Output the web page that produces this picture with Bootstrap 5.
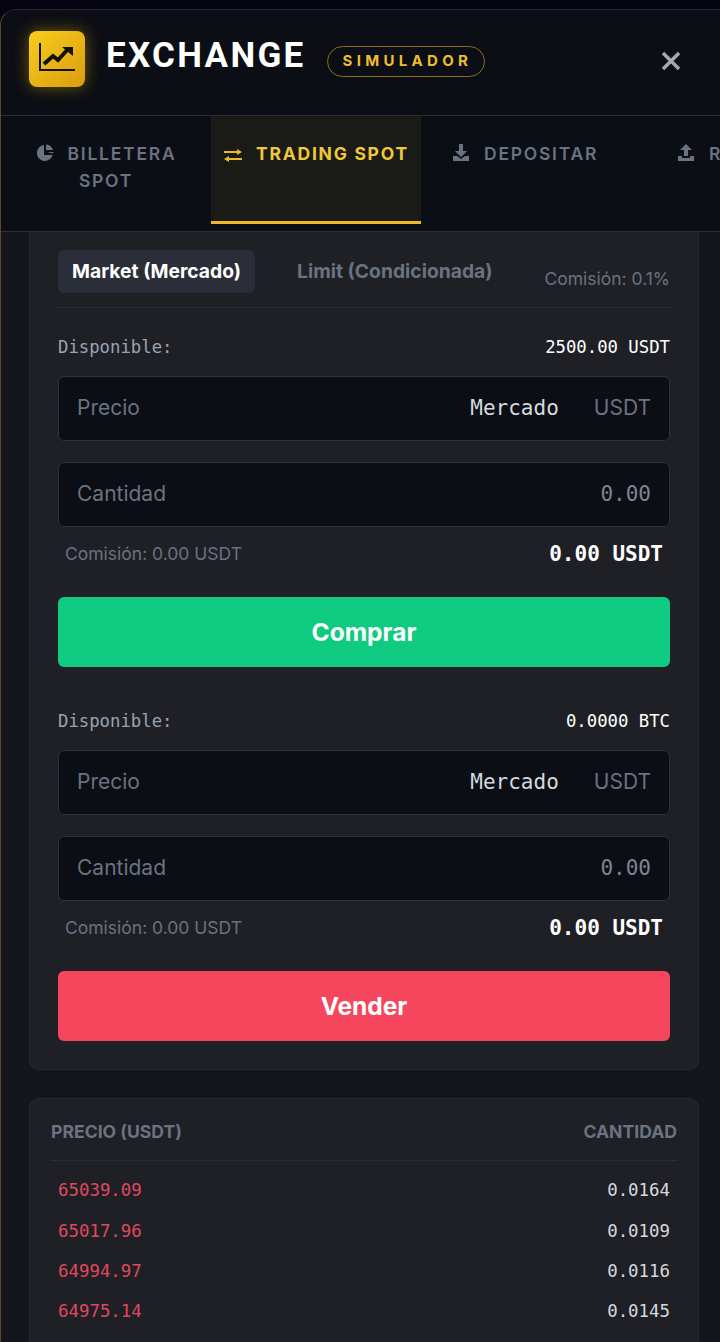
<!DOCTYPE html>
<html lang="es">
<head>
  <meta charset="UTF-8" />
  <meta name="viewport" content="width=device-width, initial-scale=1.0"/>
  <title>Exchange Simulador</title>
  <link href="https://cdn.jsdelivr.net/npm/bootstrap@5.3.2/dist/css/bootstrap.min.css" rel="stylesheet" />
  <style>
    html, body { height: 100%; overflow: hidden; }
    body {
      background-color: #05030f;
      font-family: Inter, sans-serif;
      padding-top: 9px;
    }
    .mono { font-family: "DejaVu Sans Mono", monospace; }
    .shell {
      height: 1333px;
      overflow: hidden;
      background-color: #14161b;
      border-top: 1px solid #262a33;
      border-left: 1px solid #5a4a1c;
      border-top-left-radius: 16px;
    }
    .top-bar {
      height: 106px;
      padding: 0 28px 8px;
      background-color: #0b0e14;
      border-bottom: 1px solid #2a2e37;
    }
    .logo-box {
      width: 56px;
      height: 56px;
      flex: none;
      border-radius: 8px;
      background: linear-gradient(135deg, #f9cd1c, #d99d0f);
      box-shadow: 0 0 16px rgba(240, 185, 11, .45);
    }
    .brand {
      font-family: Roboto, sans-serif;
      font-size: 35px;
      font-weight: 700;
      letter-spacing: 2.3px;
      color: #fff;
      line-height: 1;
      margin-left: 21px;
      margin-top: -6px;
    }
    .sim-tag {
      height: 31px;
      margin-left: 21px;
      margin-top: 5px;
      padding: 0 12px 0 15px;
      border: 1px solid #8a6f22;
      border-radius: 16px;
      color: #eebd2c;
      font-size: 15px;
      font-weight: 700;
      letter-spacing: 4.3px;
    }
    .close-x { margin-left: auto; margin-right: 10px; margin-top: 4px; }
    .tab-row {
      height: 116px;
      background-color: #0b0e14;
      border-bottom: 1px solid #2a2e37;
      white-space: nowrap;
    }
    .tab-item {
      padding: 24px 0 0 32px;
      color: #6b7280;
      font-size: 17.5px;
      font-weight: 600;
      letter-spacing: 1.75px;
      line-height: 27px;
      flex: none;
    }
    .tab-item svg { margin-right: 14px; vertical-align: -2px; }
    .tab-wallet { width: 210px; padding: 24px 0 0; text-align: center; }
    .tab-active {
      width: 210px;
      height: 108px;
      padding-left: 13px;
      background-color: #1a1a17;
      color: #f0c93a;
      border-bottom: 3px solid #ecb92c;
      font-weight: 700;
    }
    .tab-deposit { width: 224px; padding-left: 31px; }
    .scroll-area { padding: 0 21px 0 28px; }
    .panel {
      background-color: #1e2026;
      border: 1px solid #272a31;
      border-radius: 10px;
      padding: 0 28px 28px;
    }
    .panel-first { border-top: 0; border-top-left-radius: 0; border-top-right-radius: 0; padding-top: 18px; }
    .order-tabs { border-bottom: 1px solid #2a2d34; padding-bottom: 14px; margin-bottom: 27px; }
    .order-tab {
      padding: 0 14px;
      height: 43px;
      border-radius: 6px;
      font-size: 19.3px;
      font-weight: 700;
      color: #6b7280;
      line-height: 43px;
    }
    .order-tab.on { background-color: #2b2d38; color: #fff; margin-right: 28px; }
    .fee-note { margin-left: auto; margin-bottom: 1px; color: #6b7280; font-size: 17.5px; align-self: flex-end; }
    .avail { font-size: 17.3px; color: #fff; line-height: 24px; margin-bottom: 17px; }
    .avail span:first-child { color: #9ca3af; }
    .field {
      height: 65px;
      background-color: #0b0e14;
      border: 1px solid #2e323b;
      border-radius: 6px;
      padding: 0 18px 2px;
      font-size: 21px;
      margin-bottom: 21px;
      color: #6b7280;
    }
    .field .mono { color: #d6d9de; margin-left: auto; margin-right: 35px; padding-top: 2px; }
    .field .qty { color: #7f848e; margin-right: 0; }
    .sum-row { height: 31px; padding: 2px 7px 0; margin-top: -10px; margin-bottom: 28px; }
    .sum-row .fee { color: #6b7280; font-size: 17.5px; }
    .sum-row .total { color: #fff; font-size: 21px; font-weight: 700; }
    .act-btn {
      display: block;
      width: 100%;
      height: 70px;
      font-size: 24.5px;
      font-weight: 700;
      color: #fff;
      border: 0;
      border-radius: 6px;
    }
    .act-buy { background-color: #0ecb81; margin-bottom: 42px; }
    .act-buy:hover { background-color: #0ecb81; color: #fff; }
    .act-sell { background-color: #f6465d; }
    .act-sell:hover { background-color: #f6465d; color: #fff; }
    .book { margin-top: 28px; padding: 20px 21px 0; height: 300px; }
    .book-head {
      color: #6b7280;
      font-size: 17.6px;
      font-weight: 700;
      padding-bottom: 15px;
      border-bottom: 1px solid #2a2d34;
      margin-bottom: 9px;
    }
    .book-row { padding: 0 7px; height: 40.2px; font-size: 17.4px; color: #d6d9de; }
    .book-row span:first-child { color: #e0485c; }
  </style>
</head>
<body>
  <div class="shell">
    <div class="top-bar d-flex align-items-center">
      <div class="logo-box d-flex align-items-center justify-content-center">
        <svg width="38" height="38" viewBox="0 0 38 38" fill="none">
          <path d="M2 3V30H37" stroke="#14110a" stroke-width="2"/>
          <path d="M6 24L15 16L20 20L31 8" stroke="#14110a" stroke-width="4"/>
          <path d="M24 7H35V16Z" fill="#14110a"/>
        </svg>
      </div>
      <div class="brand">EXCHANGE</div>
      <div class="sim-tag d-flex align-items-center">SIMULADOR</div>
      <svg class="close-x" width="22" height="22" viewBox="0 0 22 22">
        <path d="M3 3L19 19M19 3L3 19" stroke="#a4a9b3" stroke-width="3.4"/>
      </svg>
    </div>

    <div class="tab-row d-flex align-items-start">
      <div class="tab-item tab-wallet">
        <svg width="18" height="18" viewBox="0 0 18 18" fill="#6b7280">
          <path d="M8 1A8 8 0 1 0 16.6 11H8Z"/>
          <path d="M10 0.5A8 8 0 0 1 17 6H10Z"/>
          <path d="M11 8H17.5A8 8 0 0 1 17 9.6Z"/>
        </svg>BILLETERA<br>SPOT
      </div>
      <div class="tab-item tab-active">
        <svg width="18" height="13" viewBox="0 0 18 13" fill="#ecb92c">
          <path d="M0 2H13V0L18 3L13 6V4H0Z"/>
          <path d="M18 9H5V7L0 10L5 13V11H18Z"/>
        </svg>TRADING SPOT
      </div>
      <div class="tab-item tab-deposit">
        <svg width="18" height="18" viewBox="0 0 18 18" fill="#6b7280">
          <path d="M7 0H11V7H15L9 13L3 7H7Z"/>
          <path d="M1 12H5L9 15L13 12H17V17H1Z"/>
        </svg>DEPOSITAR
      </div>
      <div class="tab-item">
        <svg width="18" height="18" viewBox="0 0 18 18" fill="#6b7280">
          <path d="M7 12H11V6H15L9 0L3 6H7Z"/>
          <path d="M1 12H5V14H13V12H17V17H1Z"/>
        </svg>RETIRAR
      </div>
    </div>

    <div class="scroll-area">
      <div class="panel panel-first">
        <div class="order-tabs d-flex">
          <div class="order-tab on">Market (Mercado)</div>
          <div class="order-tab">Limit (Condicionada)</div>
          <div class="fee-note">Comisión: 0.1%</div>
        </div>

        <div class="avail mono d-flex justify-content-between"><span>Disponible:</span><span>2500.00 USDT</span></div>
        <div class="field d-flex align-items-center"><span>Precio</span><span class="mono">Mercado</span><span>USDT</span></div>
        <div class="field d-flex align-items-center"><span>Cantidad</span><span class="mono qty">0.00</span></div>
        <div class="sum-row d-flex justify-content-between align-items-center"><span class="fee">Comisión: 0.00 USDT</span><span class="total mono">0.00 USDT</span></div>
        <button class="btn act-btn act-buy">Comprar</button>

        <div class="avail mono d-flex justify-content-between"><span>Disponible:</span><span>0.0000 BTC</span></div>
        <div class="field d-flex align-items-center"><span>Precio</span><span class="mono">Mercado</span><span>USDT</span></div>
        <div class="field d-flex align-items-center"><span>Cantidad</span><span class="mono qty">0.00</span></div>
        <div class="sum-row d-flex justify-content-between align-items-center"><span class="fee">Comisión: 0.00 USDT</span><span class="total mono">0.00 USDT</span></div>
        <button class="btn act-btn act-sell">Vender</button>
      </div>

      <div class="panel book">
        <div class="book-head d-flex justify-content-between"><span>PRECIO (USDT)</span><span>CANTIDAD</span></div>
        <div class="book-row mono d-flex justify-content-between align-items-center"><span>65039.09</span><span>0.0164</span></div>
        <div class="book-row mono d-flex justify-content-between align-items-center"><span>65017.96</span><span>0.0109</span></div>
        <div class="book-row mono d-flex justify-content-between align-items-center"><span>64994.97</span><span>0.0116</span></div>
        <div class="book-row mono d-flex justify-content-between align-items-center"><span>64975.14</span><span>0.0145</span></div>
      </div>
    </div>
  </div>
  <script src="https://cdn.jsdelivr.net/npm/bootstrap@5.3.2/dist/js/bootstrap.bundle.min.js"></script>
</body>
</html>
